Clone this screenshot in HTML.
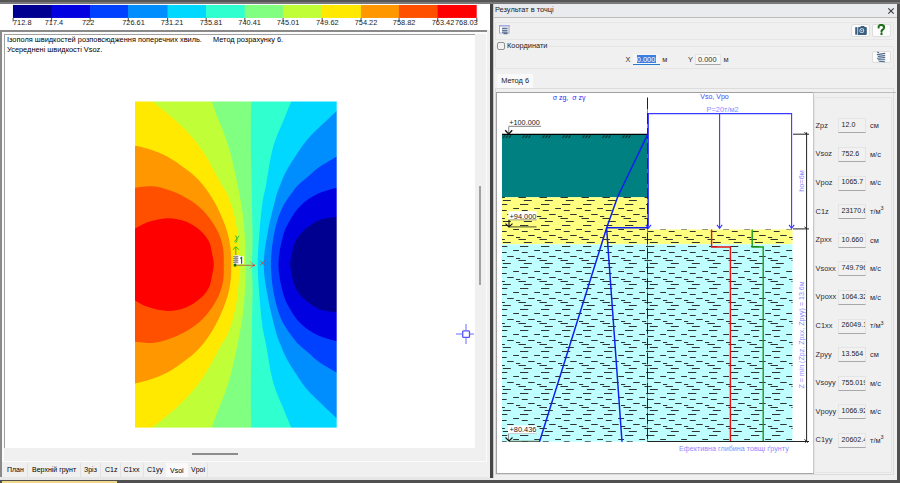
<!DOCTYPE html>
<html><head><meta charset="utf-8">
<style>
*{margin:0;padding:0;box-sizing:border-box}
html,body{width:900px;height:483px;overflow:hidden;background:#f0f0f0;font-family:"Liberation Sans",sans-serif;font-size:7.4px;color:#000}
.a{position:absolute}
.t{position:absolute;white-space:nowrap;line-height:1}
sup{font-size:5.5px;vertical-align:top;position:relative;top:-1.5px}
</style></head><body>
<!-- top dark bar -->
<div class="a" style="left:0;top:0;width:900px;height:2px;background:#565656"></div>
<div class="a" style="left:0;top:2px;width:900px;height:2px;background:#7a7a7a"></div>
<!-- bottom dark bar -->
<div class="a" style="left:0;top:480px;width:900px;height:3px;background:#505050"></div>
<div class="a" style="left:2px;top:481px;width:115px;height:2px;background:#f2d98a"></div>

<!-- LEFT PANE -->
<div class="a" id="leftpane" style="left:0;top:4px;width:490px;height:476px;background:#f0f0f0">
  <div class="a" style="left:0;top:0;width:490px;height:26px;background:#fff"></div>
</div>
<!-- legend swatches -->
<svg class="a" id="legend" style="left:0;top:0" width="490" height="30"><rect x="12.96" y="4.95" width="39.24" height="13" fill="#000090"/><rect x="51.5" y="4.95" width="39.20" height="13" fill="#0000e0"/><rect x="90.0" y="4.95" width="38.80" height="13" fill="#0040ff"/><rect x="128.1" y="4.95" width="40.10" height="13" fill="#008eff"/><rect x="167.5" y="4.95" width="39.20" height="13" fill="#00d8ff"/><rect x="206" y="4.95" width="39.40" height="13" fill="#30ffd0"/><rect x="244.7" y="4.95" width="38.90" height="13" fill="#80ff80"/><rect x="282.9" y="4.95" width="39.80" height="13" fill="#c0ff38"/><rect x="322" y="4.95" width="39.60" height="13" fill="#ffe900"/><rect x="360.9" y="4.95" width="38.70" height="13" fill="#ff9800"/><rect x="398.9" y="4.95" width="39.40" height="13" fill="#ff5000"/><rect x="437.6" y="4.95" width="39.10" height="13" fill="#ff0000"/></svg>
<div id="leglabels">
  <div class="t" style="left:13px;top:18.9px;color:#222">712.8</div>
  <div class="t" style="left:44.7px;top:18.9px;color:#222">717.4</div>
  <div class="t" style="left:82px;top:18.9px;color:#222">722</div>
  <div class="t" style="left:122.2px;top:18.9px;color:#222">726.61</div>
  <div class="t" style="left:160.7px;top:18.9px;color:#222">731.21</div>
  <div class="t" style="left:199.7px;top:18.9px;color:#222">735.81</div>
  <div class="t" style="left:238.3px;top:18.9px;color:#222">740.41</div>
  <div class="t" style="left:276.7px;top:18.9px;color:#222">745.01</div>
  <div class="t" style="left:316px;top:18.9px;color:#222">749.62</div>
  <div class="t" style="left:354.7px;top:18.9px;color:#222">754.22</div>
  <div class="t" style="left:392.8px;top:18.9px;color:#222">758.82</div>
  <div class="t" style="left:431.7px;top:18.9px;color:#222">763.42</div>
  <div class="t" style="left:455px;top:18.9px;color:#222">768.03</div>
  <svg class="a" style="left:0;top:0" width="490" height="30"><rect x="12.66" y="18" width="0.9" height="3.5" fill="#333"/><rect x="51.20" y="18" width="0.9" height="3.5" fill="#333"/><rect x="89.70" y="18" width="0.9" height="3.5" fill="#333"/><rect x="127.80" y="18" width="0.9" height="3.5" fill="#333"/><rect x="167.20" y="18" width="0.9" height="3.5" fill="#333"/><rect x="205.70" y="18" width="0.9" height="3.5" fill="#333"/><rect x="244.40" y="18" width="0.9" height="3.5" fill="#333"/><rect x="282.60" y="18" width="0.9" height="3.5" fill="#333"/><rect x="321.70" y="18" width="0.9" height="3.5" fill="#333"/><rect x="360.60" y="18" width="0.9" height="3.5" fill="#333"/><rect x="398.60" y="18" width="0.9" height="3.5" fill="#333"/><rect x="437.30" y="18" width="0.9" height="3.5" fill="#333"/><rect x="476.40" y="18" width="0.9" height="3.5" fill="#333"/></svg>
</div>

<!-- text panel frame -->
<div class="a" style="left:0;top:30px;width:487px;height:432px;border-top:2px solid #8a8a8a;border-left:2px solid #8a8a8a;background:#f0f0f0"></div>
<div class="a" style="left:2px;top:32px;width:485px;height:430px;border-top:2px solid #fbfbfb;border-left:2px solid #fbfbfb"></div>
<div class="a" style="left:4px;top:34px;width:471px;height:414px;background:#fff;border-top:1px solid #a0a0a0;border-left:1px solid #a0a0a0"></div>
<div class="t" style="left:7px;top:36.2px">Ізополя швидкостей розповсюдження поперечних хвиль.</div>
<div class="t" style="left:213px;top:36.2px">Метод розрахунку 6.</div>
<div class="t" style="left:7px;top:46.2px">Усереднені швидкості Vsoz.</div>
<!-- scrollbars -->
<div class="a" style="left:0;top:30px;width:1.6px;height:447px;background:#8a8a8a"></div>
<div class="a" style="left:0;top:477px;width:490px;height:3px;background:#e6e6e6"></div>
<div class="a" style="left:479px;top:186px;width:2px;height:99px;background:#a2a2a2"></div>
<div class="a" style="left:192px;top:453px;width:46px;height:2px;background:#8c8c8c"></div>
<div class="a" style="left:486px;top:34px;width:1px;height:428px;background:#fbfbfb"></div>
<div class="a" style="left:4px;top:461px;width:483px;height:1px;background:#fbfbfb"></div>

<!-- crosshair -->
<svg class="a" style="left:450px;top:320px" width="30" height="30">
  <g stroke="#5050ff" stroke-width="1.3" fill="none">
    <rect x="12.7" y="10.8" width="6.8" height="6.6" rx="1"/>
    <line x1="16" y1="4" x2="16" y2="10.3" stroke="#8c8cff"/>
    <line x1="16" y1="17.7" x2="16" y2="24" stroke="#8c8cff"/>
    <line x1="6" y1="14" x2="12.2" y2="14" stroke="#8c8cff"/>
    <line x1="19.8" y1="14" x2="24" y2="14" stroke="#8c8cff"/>
  </g>
</svg>

<!-- tabs -->
<div id="tabs" style="font-size:7px">
  <div class="a" style="left:166px;top:463px;width:22px;height:14px;background:#fafafa"></div>
  <div class="a" style="left:27px;top:463px;width:1px;height:14px;background:#e2e2e2"></div>
  <div class="a" style="left:79.5px;top:463px;width:1px;height:14px;background:#e2e2e2"></div>
  <div class="a" style="left:100px;top:463px;width:1px;height:14px;background:#e2e2e2"></div>
  <div class="a" style="left:120px;top:463px;width:1px;height:14px;background:#e2e2e2"></div>
  <div class="a" style="left:143px;top:463px;width:1px;height:14px;background:#e2e2e2"></div>
  <div class="a" style="left:206.5px;top:463px;width:1px;height:14px;background:#e2e2e2"></div>
  <div class="t" style="left:7px;top:466px">План</div>
  <div class="t" style="left:32px;top:466px">Верхній грунт</div>
  <div class="t" style="left:84px;top:466px">Зріз</div>
  <div class="t" style="left:105px;top:466px">C1z</div>
  <div class="t" style="left:123.5px;top:466px">C1xx</div>
  <div class="t" style="left:147px;top:466px">C1yy</div>
  <div class="t" style="left:170px;top:467px">Vsoi</div>
  <div class="t" style="left:191px;top:466px">Vpoi</div>
</div>

<!-- divider -->
<div class="a" style="left:490px;top:4px;width:2.5px;height:474px;background:#454545"></div>
<div class="a" style="left:492.5px;top:4px;width:1px;height:474px;background:#c8c8c8"></div>

<!-- CONTOUR PLOT -->
<svg class="a" id="contour" style="left:0;top:0" width="490" height="460">
<defs><mask id="pc" maskUnits="userSpaceOnUse" x="0" y="0" width="490" height="460"><rect x="135.0" y="101.5" width="201.7" height="326.1" fill="#fff"/></mask></defs>
<g mask="url(#pc)">
<rect x="132.0" y="98.5" width="207.7" height="332.1" fill="#80ff80"/>
<path fill="#c0ff38" d="M132.0,98.5 L211.09,98.50 C212.04,101.33 214.58,109.50 216.80,115.50 C219.02,121.50 222.03,127.83 224.40,134.50 C226.77,141.17 228.80,147.08 231.00,155.50 C233.20,163.92 235.68,175.58 237.60,185.00 C239.52,194.42 241.30,203.42 242.50,212.00 C243.70,220.58 244.28,229.33 244.80,236.50 C245.32,243.67 245.43,250.32 245.60,255.00 C245.77,259.68 245.80,261.37 245.80,264.55 C245.80,267.73 245.77,269.43 245.60,274.10 C245.43,278.78 245.32,285.43 244.80,292.60 C244.28,299.77 243.70,308.52 242.50,317.10 C241.30,325.68 239.52,334.68 237.60,344.10 C235.68,353.52 233.20,365.18 231.00,373.60 C228.80,382.02 226.77,387.93 224.40,394.60 C222.03,401.27 219.02,407.60 216.80,413.60 C214.58,419.60 212.04,427.77 211.09,430.60 L132.0,430.6Z"/>
<path fill="#ffe900" d="M132.0,98.5 L148.71,98.50 C151.80,101.02 161.42,108.58 167.30,113.60 C173.18,118.62 179.03,123.62 184.00,128.60 C188.97,133.58 193.05,138.22 197.10,143.50 C201.15,148.78 204.27,153.47 208.30,160.30 C212.33,167.13 218.18,178.95 221.30,184.50 C224.42,190.05 224.97,188.97 227.00,193.60 C229.03,198.23 231.80,206.07 233.50,212.30 C235.20,218.53 236.32,224.78 237.20,231.00 C238.08,237.22 238.50,244.01 238.80,249.60 C239.10,255.19 239.00,259.57 239.00,264.55 C239.00,269.53 239.10,273.91 238.80,279.50 C238.50,285.09 238.08,291.88 237.20,298.10 C236.32,304.32 235.20,310.57 233.50,316.80 C231.80,323.03 229.03,330.87 227.00,335.50 C224.97,340.13 224.42,339.05 221.30,344.60 C218.18,350.15 212.33,361.97 208.30,368.80 C204.27,375.63 201.15,380.32 197.10,385.60 C193.05,390.88 188.97,395.52 184.00,400.50 C179.03,405.48 173.18,410.48 167.30,415.50 C161.42,420.52 151.80,428.08 148.71,430.60 L132.0,430.6Z"/>
<path fill="#ff9800" d="M132.00,144.97 C134.77,145.64 142.72,147.08 148.60,149.00 C154.48,150.92 161.40,153.38 167.30,156.50 C173.20,159.62 179.65,164.62 184.00,167.70 C188.35,170.78 190.20,172.07 193.40,175.00 C196.60,177.93 199.78,180.95 203.20,185.30 C206.62,189.65 210.88,195.98 213.90,201.10 C216.92,206.22 219.12,211.02 221.30,216.00 C223.48,220.98 225.47,225.72 227.00,231.00 C228.53,236.28 229.80,242.11 230.50,247.70 C231.20,253.29 231.20,258.93 231.20,264.55 C231.20,270.17 231.20,275.81 230.50,281.40 C229.80,286.99 228.53,292.82 227.00,298.10 C225.47,303.38 223.48,308.12 221.30,313.10 C219.12,318.08 216.92,322.88 213.90,328.00 C210.88,333.12 206.62,339.45 203.20,343.80 C199.78,348.15 196.60,351.17 193.40,354.10 C190.20,357.03 188.35,358.32 184.00,361.40 C179.65,364.48 173.20,369.48 167.30,372.60 C161.40,375.72 154.48,378.18 148.60,380.10 C142.72,382.02 134.77,383.46 132.00,384.13Z"/>
<path fill="#ff5000" d="M132.00,187.96 C135.40,187.67 145.90,185.73 152.40,186.20 C158.90,186.67 164.48,188.32 171.00,190.80 C177.52,193.28 185.60,197.20 191.50,201.10 C197.40,205.00 202.05,209.22 206.40,214.20 C210.75,219.18 214.83,225.42 217.60,231.00 C220.37,236.58 221.97,242.11 223.00,247.70 C224.03,253.29 223.80,258.93 223.80,264.55 C223.80,270.17 224.03,275.81 223.00,281.40 C221.97,286.99 220.37,292.52 217.60,298.10 C214.83,303.68 210.75,309.92 206.40,314.90 C202.05,319.88 197.40,324.10 191.50,328.00 C185.60,331.90 177.52,335.82 171.00,338.30 C164.48,340.78 158.90,342.43 152.40,342.90 C145.90,343.37 135.40,341.43 132.00,341.14Z"/>
<path fill="#ff0000" d="M132.00,230.65 C134.47,229.29 140.92,224.58 146.80,222.50 C152.68,220.42 160.78,218.35 167.30,218.20 C173.82,218.05 180.32,219.47 185.90,221.60 C191.48,223.73 196.92,227.58 200.80,231.00 C204.68,234.42 207.33,238.38 209.20,242.10 C211.07,245.82 211.23,249.56 212.00,253.30 C212.77,257.04 213.80,260.80 213.80,264.55 C213.80,268.30 212.77,272.06 212.00,275.80 C211.23,279.54 211.07,283.28 209.20,287.00 C207.33,290.72 204.68,294.68 200.80,298.10 C196.92,301.52 191.48,305.37 185.90,307.50 C180.32,309.63 173.82,311.05 167.30,310.90 C160.78,310.75 152.68,308.68 146.80,306.60 C140.92,304.52 134.47,299.81 132.00,298.45Z"/>
<path fill="#30ffd0" d="M339.7,98.5 L251.36,98.50 C251.28,102.58 250.98,114.25 250.90,123.00 C250.82,131.75 250.78,140.67 250.90,151.00 C251.02,161.33 251.40,174.78 251.60,185.00 C251.80,195.22 251.93,203.13 252.10,212.30 C252.27,221.47 252.62,231.29 252.60,240.00 C252.58,248.71 252.00,256.37 252.00,264.55 C252.00,272.73 252.58,280.39 252.60,289.10 C252.62,297.81 252.27,307.63 252.10,316.80 C251.93,325.97 251.80,333.88 251.60,344.10 C251.40,354.32 251.02,367.77 250.90,378.10 C250.78,388.43 250.82,397.35 250.90,406.10 C250.98,414.85 251.28,426.52 251.36,430.60 L339.7,430.6Z"/>
<path fill="#00d8ff" d="M339.7,98.5 L292.54,98.50 C291.11,101.95 286.84,112.33 284.00,119.20 C281.16,126.07 277.70,133.40 275.50,139.70 C273.30,146.00 272.38,149.45 270.80,157.00 C269.22,164.55 267.40,177.33 266.00,185.00 C264.60,192.67 263.47,195.33 262.40,203.00 C261.33,210.67 260.38,220.74 259.60,231.00 C258.82,241.26 257.70,253.37 257.70,264.55 C257.70,275.73 258.82,287.84 259.60,298.10 C260.38,308.36 261.33,318.43 262.40,326.10 C263.47,333.77 264.60,336.43 266.00,344.10 C267.40,351.77 269.22,364.55 270.80,372.10 C272.38,379.65 273.30,383.10 275.50,389.40 C277.70,395.70 281.16,403.03 284.00,409.90 C286.84,416.77 291.11,427.15 292.54,430.60 L339.7,430.6Z"/>
<path fill="#008eff" d="M339.70,107.94 C336.75,110.75 327.43,119.51 322.00,124.80 C316.57,130.09 311.37,134.72 307.10,139.70 C302.83,144.68 299.73,149.72 296.40,154.70 C293.07,159.68 289.80,164.55 287.10,169.60 C284.40,174.65 282.15,180.07 280.20,185.00 C278.25,189.93 277.43,191.53 275.40,199.20 C273.37,206.87 269.95,220.11 268.00,231.00 C266.05,241.89 263.70,253.37 263.70,264.55 C263.70,275.73 266.05,287.21 268.00,298.10 C269.95,308.99 273.37,322.23 275.40,329.90 C277.43,337.57 278.25,339.17 280.20,344.10 C282.15,349.03 284.40,354.45 287.10,359.50 C289.80,364.55 293.07,369.42 296.40,374.40 C299.73,379.38 302.83,384.42 307.10,389.40 C311.37,394.38 316.57,399.01 322.00,404.30 C327.43,409.59 336.75,418.35 339.70,421.16Z"/>
<path fill="#0040ff" d="M339.70,154.67 C336.13,156.84 323.27,164.31 318.30,167.70 C313.33,171.09 312.70,172.62 309.90,175.00 C307.10,177.38 304.15,179.50 301.50,182.00 C298.85,184.50 297.42,185.27 294.00,190.00 C290.58,194.73 284.40,202.65 281.00,210.40 C277.60,218.15 275.27,227.47 273.60,236.50 C271.93,245.53 271.00,255.20 271.00,264.55 C271.00,273.90 271.93,283.58 273.60,292.60 C275.27,301.62 277.60,310.95 281.00,318.70 C284.40,326.45 290.58,334.37 294.00,339.10 C297.42,343.83 298.85,344.60 301.50,347.10 C304.15,349.60 307.10,351.72 309.90,354.10 C312.70,356.48 313.33,358.01 318.30,361.40 C323.27,364.79 336.13,372.26 339.70,374.43Z"/>
<path fill="#0000e0" d="M339.70,187.09 C336.13,188.17 324.67,190.65 318.30,193.60 C311.93,196.55 306.17,200.45 301.50,204.80 C296.83,209.15 293.40,214.42 290.30,219.70 C287.20,224.98 284.87,229.03 282.90,236.50 C280.93,243.97 278.50,255.20 278.50,264.55 C278.50,273.90 280.93,285.12 282.90,292.60 C284.87,300.08 287.20,304.12 290.30,309.40 C293.40,314.68 296.83,319.95 301.50,324.30 C306.17,328.65 311.93,332.55 318.30,335.50 C324.67,338.45 336.13,340.93 339.70,342.01Z"/>
<path fill="#000090" d="M339.70,216.51 C336.45,217.04 325.93,217.62 320.20,219.70 C314.47,221.78 309.33,225.57 305.30,229.00 C301.27,232.43 298.22,236.25 296.00,240.30 C293.78,244.35 292.95,249.26 292.00,253.30 C291.05,257.34 290.30,260.80 290.30,264.55 C290.30,268.30 291.05,271.76 292.00,275.80 C292.95,279.84 293.78,284.75 296.00,288.80 C298.22,292.85 301.27,296.67 305.30,300.10 C309.33,303.53 314.47,307.32 320.20,309.40 C325.93,311.48 336.45,312.06 339.70,312.59Z"/>
</g>

</svg>


<!-- origin marker -->
<svg class="a" style="left:226px;top:232px" width="42" height="40">
  <g stroke="#22c022" stroke-width="1" fill="none">
    <line x1="9.8" y1="14.8" x2="9.8" y2="23.5"/>
    <path d="M7,17.8 L9.8,14.6 L12.9,17.8"/>
  </g>
  <path d="M9,4 q1.5,-0.5 2,2.5 q0.5,3 -1.5,4.5 M13.2,3.8 l-4.8,6" stroke="#30b030" stroke-width="0.9" fill="none"/>
  <rect x="7" y="23.2" width="6" height="9.7" fill="#e8e8e8"/>
  <path d="M7.2,24.5 h5.5 l-5.5,2 h5.5 l-5.5,2 h5.5 l-5.5,2 h5.5" stroke="#8a8a8a" stroke-width="0.9" fill="none"/>
  <rect x="12.4" y="24" width="5.4" height="8" fill="#fff"/>
  <path d="M14.2,26.5 l1.4,-1 v6.3" stroke="#1a6a2a" stroke-width="1.2" fill="none"/>
  <line x1="11" y1="33.3" x2="27.8" y2="33.3" stroke="#b07a4a" stroke-width="1.1"/>
  <path d="M24.2,29.6 L28.2,33.3 L24.2,36.2" stroke="#c87a6a" stroke-width="0.9" fill="none"/>
  <circle cx="28" cy="33.3" r="0.9" fill="#ff2020"/>
  <circle cx="9.1" cy="33.1" r="1.6" fill="#1a6a1a"/>
  <path d="M34.5,29 l4,4 M38.8,28.8 l-4.5,4.2" stroke="#e03030" stroke-width="0.9" fill="none"/>
</svg>

<!-- DIALOG -->
<div class="a" id="dialog" style="left:493.5px;top:4px;width:403.5px;height:476px;background:#f0f0f0">
</div>
<div class="a" style="left:897px;top:4px;width:3px;height:476px;background:#505050"></div>

<!-- toolbar group -->
<div class="a" style="left:494.5px;top:21.5px;width:399px;height:18.5px;border:1px solid #e6e6e6;border-radius:1px;background:#f0f0f0"></div>
<svg class="a" style="left:496px;top:22px" width="18" height="16">
  <rect x="3.5" y="3.5" width="9.5" height="7.5" fill="#eef0f6" stroke="#a4a8c8" stroke-width="1"/>
  <rect x="3" y="3" width="10.5" height="1.5" fill="#a8a8e0"/>
  <rect x="4.2" y="5" width="1.6" height="5.5" fill="#fff"/>
  <g fill="#3c5a78">
    <rect x="6" y="5.8" width="5.5" height="1"/>
    <rect x="6" y="7.8" width="5.5" height="1"/>
    <rect x="6" y="9.6" width="5.5" height="1"/>
    <rect x="7.5" y="11.2" width="4" height="1"/>
  </g>
</svg>
<div class="a" style="left:851px;top:23.5px;width:19px;height:13px;background:#fcfcfc;border:1px solid #dedede;border-radius:2px"></div>
<div class="a" style="left:872px;top:23.5px;width:19px;height:13px;background:#fcfcfc;border:1px solid #dedede;border-radius:2px"></div>
<svg class="a" style="left:854px;top:25px" width="13" height="11">
  <path d="M1.2,2.2 h2.2 v7.5 h-2.2z" fill="#3b5f80"/>
  <path d="M4.2,2 h2 l0.8,-1 h3 l0.8,1 h1.2 q0.8,0 0.8,0.8 v6.3 q0,0.8 -0.8,0.8 h-8z" fill="#3b5f80"/>
  <circle cx="7.8" cy="5.7" r="2.4" fill="#e6ecf2"/>
  <circle cx="7.8" cy="5.7" r="1.6" fill="#3b5f80"/>
  <circle cx="7.8" cy="5.7" r="0.6" fill="#fff"/>
</svg>
<svg class="a" style="left:876px;top:24px" width="10" height="12"><path d="M2.6,3.6 C2.4,1.6 3.8,0.9 5.2,0.9 C7.2,0.9 8.1,2.1 8.1,3.4 C8.1,5.2 6.1,5.6 5.6,6.8 L5.5,7.8" stroke="#1e6e1e" stroke-width="2" fill="none" stroke-linecap="round"/><circle cx="5.5" cy="9.9" r="1.2" fill="#1e6e1e"/></svg>

<!-- coordinates group -->
<div class="a" style="left:494.5px;top:45.5px;width:399px;height:23px;border:1px solid #e6e6e6;border-radius:1px"></div>
<div class="a" style="left:506px;top:42px;width:42px;height:8px;background:#f0f0f0"></div>
<div class="a" style="left:497px;top:41.8px;width:8px;height:8.2px;border:1.2px solid #909090;border-radius:2px;background:#f2f2f2"></div>
<div class="t" style="left:507px;top:42px;color:#1a1a1a">Координати</div>
<div class="t" style="left:625.5px;top:56px;color:#333">X</div>
<div class="a" style="left:633px;top:53.5px;width:27px;height:11.5px;background:#f6f6f6;border-bottom:1.5px solid #2a7ad0"></div>
<div class="a" style="left:636.7px;top:55.3px;width:19.5px;height:7.5px;background:#3a7fe0"></div>
<div class="t" style="left:636.8px;top:55.8px;color:#fff">0.000</div>
<div class="t" style="left:662.2px;top:56px;color:#333">м</div>
<div class="t" style="left:688px;top:56px;color:#333">Y</div>
<div class="a" style="left:695px;top:53.5px;width:26px;height:11.5px;background:#f6f6f6;border:1px solid #e4e4e4;border-bottom:1px solid #a8a8a8"></div>
<div class="t" style="left:698px;top:55.8px;color:#333">0.000</div>
<div class="t" style="left:723.5px;top:56px;color:#333">м</div>
<div class="a" style="left:872px;top:50.6px;width:19px;height:12.7px;background:#fcfcfc;border:1px solid #dedede;border-radius:2px"></div>
<svg class="a" style="left:876px;top:51px" width="11" height="12">
  <g stroke="#4a6888" stroke-width="1.1" fill="none" stroke-linecap="round">
    <path d="M1.6,1.2 L2.6,1.6"/>
    <path d="M1.4,3.6 L8.8,2.4"/>
    <path d="M2.2,5.4 L8.8,4.6"/>
    <path d="M1.4,7.2 L8.8,6.6"/>
    <path d="M2.2,8.8 L8.8,8.8"/>
    <path d="M3.2,10.2 L8.6,10.8"/>
  </g>
</svg>

<!-- tab -->
<div class="a" style="left:497px;top:74px;width:36px;height:14px;background:#f9f9f9"></div>
<div class="t" style="left:501.2px;top:77.2px;color:#1a1a1a">Метод 6</div>
<div class="a" style="left:494.5px;top:88px;width:399.5px;height:386.5px;border:1px solid #dcdcdc;background:#f0f0f0"></div>
<!-- chart white box -->
<div class="a" style="left:496px;top:92px;width:317.5px;height:382px;background:#fff;border:1px solid #a8a8a8;border-top-color:#a0a0a0;border-left-color:#a0a0a0"></div>
<!-- param group -->
<div class="a" style="left:814px;top:96.5px;width:78px;height:376px;border:1px solid #e4e4e4;border-radius:1px"></div>
<div class="a" style="left:813px;top:92px;width:1px;height:381px;background:#c8c8c8"></div>
<div class="a" style="left:813px;top:92px;width:82.7px;height:1px;background:#bdbdbd"></div>


<!-- CHART -->
<svg class="a" id="chart" style="left:0;top:0" width="900" height="483">
<defs>
  <pattern id="dash" patternUnits="userSpaceOnUse" x="502" y="15" width="21" height="21">
    <g fill="#2e3430">
      <rect x="0" y="0" width="5.3" height="1"/><rect x="18" y="0" width="3" height="1"/>
      <rect x="11.2" y="4" width="5.8" height="1"/>
      <rect x="0" y="6" width="4.7" height="1"/><rect x="19.8" y="6" width="1.2" height="1"/>
      <rect x="5.2" y="10" width="6.5" height="1"/>
      <rect x="14" y="12" width="4.2" height="1"/>
      <rect x="0" y="14" width="2.9" height="1"/><rect x="16.5" y="14" width="4.5" height="1"/>
      <rect x="0.8" y="17" width="8" height="1"/>
    </g>
  </pattern>
</defs>
<rect x="502" y="134.6" width="145.5" height="62.7" fill="#008080"/>
<rect x="502" y="197.3" width="145.5" height="47" fill="#ffff80"/>
<rect x="647.5" y="229.5" width="145" height="14.8" fill="#ffff80"/>
<rect x="502" y="244.3" width="290.5" height="197.4" fill="#c0ffff"/>
<rect x="502" y="197" width="145.5" height="244.7" fill="url(#dash)"/>
<rect x="647.5" y="229.5" width="145" height="212.2" fill="url(#dash)"/>
<!-- hatch on ground -->
<g stroke="#0e2e2e" stroke-width="1.1">
  <path d="M503,138 l2,-2.6 M506,138 l2,-2.6 M509,138 l2,-2.6"/>
  <path d="M522.5,138 l2,-2.6 M525.5,138 l2,-2.6 M528.5,138 l2,-2.6"/>
  <path d="M542.5,138 l2,-2.6 M545.5,138 l2,-2.6 M548.5,138 l2,-2.6"/>
  <path d="M562.5,138 l2,-2.6 M565.5,138 l2,-2.6 M568.5,138 l2,-2.6"/>
  <path d="M582.5,138 l2,-2.6 M585.5,138 l2,-2.6 M588.5,138 l2,-2.6"/>
  <path d="M602.5,138 l2,-2.6 M605.5,138 l2,-2.6 M608.5,138 l2,-2.6"/>
  <path d="M622.5,138 l2,-2.6 M625.5,138 l2,-2.6 M628.5,138 l2,-2.6"/>
</g>
<line x1="502" y1="134.4" x2="647.5" y2="134.4" stroke="#000" stroke-width="1.3"/>
<!-- axis dash-dot -->
<line x1="647.5" y1="97.5" x2="647.5" y2="441.7" stroke="#202020" stroke-width="1" stroke-dasharray="12,1,1,1"/>
<!-- blue load rectangle -->
<g stroke="#3a3aff" stroke-width="1.1" fill="none">
  <path d="M648.4,228 V113.6 H791.6 V228"/>
  <line x1="719.6" y1="113.6" x2="719.6" y2="228"/>
  <path d="M645.8,224.8 L648.4,228.3 L651,224.8 M717,224.8 L719.6,228.3 L722.2,224.8 M789,224.8 L791.6,228.3 L794.2,224.8"/>
</g>
<!-- blue stress lines -->
<g stroke="#1020f0" stroke-width="1.5" fill="none">
  <path d="M647.5,134.6 L617.5,197.3 L606.6,228 L539.5,441.7"/>
  <path d="M606.6,228 L622,441.7"/>
  <line x1="606.6" y1="227.7" x2="648" y2="227.7"/>
</g>
<!-- red & green -->
<path d="M711.6,229.5 V247 H730.4 V441.7" stroke="#ee1111" stroke-width="1.4" fill="none"/>
<path d="M752.2,229.5 V247 H763.2 V441.7" stroke="#1a9a1a" stroke-width="1.4" fill="none"/>
<!-- dimension lines right -->
<g stroke="#222" stroke-width="1" fill="none">
  <line x1="793" y1="134.2" x2="809" y2="134.2"/>
  <line x1="793" y1="228.9" x2="809" y2="228.9"/>
  <line x1="647.5" y1="441.5" x2="809" y2="441.5"/>
  <line x1="806.6" y1="132.3" x2="806.6" y2="442"/>
  <path d="M804.5,132.2 l2.2,2.2 M804.5,226.7 l2.2,2.2 M804.5,439.3 l2.2,2.2 M805.2,442.6 l1.4,-1.2 l1.4,1.2"/>
</g>
<!-- level marks -->
<g stroke="#888" stroke-width="0.9" fill="none">
  <path d="M508.7,126.4 H541 M508.7,126.4 V133.5" stroke-width="1.2" stroke="#999"/>
  <path d="M508.5,219.8 H536.5"/>
  <path d="M508.5,433.3 H536.5 M508.5,433.3 V441"/>
</g>
<g stroke="#111" stroke-width="1.1" fill="none">
  <path d="M505.2,130.3 L508.7,134 L512.2,130.3" stroke-width="1.4"/>
  <path d="M505.5,223.6 L509,227 L512.5,223.6 M509,220 V227"/>
  <path d="M505.5,437.5 L509,441 L512.5,437.5"/>
</g>
<line x1="509" y1="226.9" x2="536.5" y2="226.9" stroke="#3a3a20" stroke-width="0.9"/>
<line x1="509" y1="441.3" x2="540" y2="441.3" stroke="#3a3a20" stroke-width="0.9"/>
<rect x="508.3" y="211.2" width="28.2" height="8" fill="#fff"/>
<rect x="508" y="425.5" width="28.5" height="8" fill="#fff"/>
</svg>
<div class="t" style="left:509.3px;top:118.5px;font-size:7.25px;color:#1a1a1a">+100.000</div>
<div class="t" style="left:509.5px;top:212.5px;color:#1a1a1a">+94.000</div>
<div class="t" style="left:509.5px;top:426.2px;color:#1a1a1a">+80.436</div>
<div class="t" style="left:552.7px;top:93.6px;font-size:7px;color:#2a2aff">σ zg,&nbsp; σ zγ</div>
<div class="t" style="left:700.2px;top:93px;font-size:7.05px;color:#4646ff">Vso, Vpo</div>
<div class="t" style="left:706.6px;top:106px;color:#8a8aff">P=20т/м2</div>
<div class="t" style="left:679px;top:445px;font-size:7.2px;color:#8a8aff">Ефективна глибина товщі ґрунту</div>
<div class="t" style="left:801.5px;top:181px;color:#8a8aff;transform:translate(-50%,-50%) rotate(-90deg)">hо=6м</div>
<div class="t" style="left:801.5px;top:334.5px;font-size:7.05px;color:#8a8aff;transform:translate(-50%,-50%) rotate(-90deg)">Z = min (Zpz, Zpxx, Zpyy) = 13.6м</div>

<!-- params -->
<div class="t" style="left:815.6px;top:121.8px;color:#2a2a3a">Zpz</div>
<div class="a" style="left:838px;top:118.3px;width:28px;height:15px;background:#f1f1f1;border:1px solid #e4e4e4;border-bottom:1px solid #a9a9a9;overflow:hidden"><div class="t" style="left:2.6px;top:1.9px;font-size:7.05px;color:#222">12.0</div></div>
<div class="t" style="left:870px;top:122.1px;color:#2a2a3a">см</div>
<div class="t" style="left:815.6px;top:150.4px;color:#2a2a3a">Vsoz</div>
<div class="a" style="left:838px;top:146.9px;width:28px;height:15px;background:#f1f1f1;border:1px solid #e4e4e4;border-bottom:1px solid #a9a9a9;overflow:hidden"><div class="t" style="left:2.6px;top:1.9px;font-size:7.05px;color:#222">752.6</div></div>
<div class="t" style="left:870px;top:150.7px;color:#2a2a3a">м/с</div>
<div class="t" style="left:815.6px;top:179.0px;color:#2a2a3a">Vpoz</div>
<div class="a" style="left:838px;top:175.5px;width:28px;height:15px;background:#f1f1f1;border:1px solid #e4e4e4;border-bottom:1px solid #a9a9a9;overflow:hidden"><div class="t" style="left:2.6px;top:1.9px;font-size:7.05px;color:#222">1065.7</div></div>
<div class="t" style="left:870px;top:179.3px;color:#2a2a3a">м/с</div>
<div class="t" style="left:815.6px;top:207.6px;color:#2a2a3a">C1z</div>
<div class="a" style="left:838px;top:204.1px;width:28px;height:15px;background:#f1f1f1;border:1px solid #e4e4e4;border-bottom:1px solid #a9a9a9;overflow:hidden"><div class="t" style="left:2.6px;top:1.9px;font-size:7.05px;color:#222">23170.6</div></div>
<div class="t" style="left:870px;top:207.9px;color:#2a2a3a">т/м<sup>3</sup></div>
<div class="t" style="left:815.6px;top:236.2px;color:#2a2a3a">Zpxx</div>
<div class="a" style="left:838px;top:232.7px;width:28px;height:15px;background:#f1f1f1;border:1px solid #e4e4e4;border-bottom:1px solid #a9a9a9;overflow:hidden"><div class="t" style="left:2.6px;top:1.9px;font-size:7.05px;color:#222">10.660</div></div>
<div class="t" style="left:870px;top:236.5px;color:#2a2a3a">см</div>
<div class="t" style="left:815.6px;top:264.8px;color:#2a2a3a">Vsoxx</div>
<div class="a" style="left:838px;top:261.3px;width:28px;height:15px;background:#f1f1f1;border:1px solid #e4e4e4;border-bottom:1px solid #a9a9a9;overflow:hidden"><div class="t" style="left:2.6px;top:1.9px;font-size:7.05px;color:#222">749.796</div></div>
<div class="t" style="left:870px;top:265.1px;color:#2a2a3a">м/с</div>
<div class="t" style="left:815.6px;top:293.4px;color:#2a2a3a">Vpoxx</div>
<div class="a" style="left:838px;top:289.9px;width:28px;height:15px;background:#f1f1f1;border:1px solid #e4e4e4;border-bottom:1px solid #a9a9a9;overflow:hidden"><div class="t" style="left:2.6px;top:1.9px;font-size:7.05px;color:#222">1064.32</div></div>
<div class="t" style="left:870px;top:293.7px;color:#2a2a3a">м/с</div>
<div class="t" style="left:815.6px;top:322.0px;color:#2a2a3a">C1xx</div>
<div class="a" style="left:838px;top:318.5px;width:28px;height:15px;background:#f1f1f1;border:1px solid #e4e4e4;border-bottom:1px solid #a9a9a9;overflow:hidden"><div class="t" style="left:2.6px;top:1.9px;font-size:7.05px;color:#222">26049.1</div></div>
<div class="t" style="left:870px;top:322.3px;color:#2a2a3a">т/м<sup>3</sup></div>
<div class="t" style="left:815.6px;top:350.6px;color:#2a2a3a">Zpyy</div>
<div class="a" style="left:838px;top:347.1px;width:28px;height:15px;background:#f1f1f1;border:1px solid #e4e4e4;border-bottom:1px solid #a9a9a9;overflow:hidden"><div class="t" style="left:2.6px;top:1.9px;font-size:7.05px;color:#222">13.564</div></div>
<div class="t" style="left:870px;top:350.9px;color:#2a2a3a">см</div>
<div class="t" style="left:815.6px;top:379.2px;color:#2a2a3a">Vsoyy</div>
<div class="a" style="left:838px;top:375.7px;width:28px;height:15px;background:#f1f1f1;border:1px solid #e4e4e4;border-bottom:1px solid #a9a9a9;overflow:hidden"><div class="t" style="left:2.6px;top:1.9px;font-size:7.05px;color:#222">755.019</div></div>
<div class="t" style="left:870px;top:379.5px;color:#2a2a3a">м/с</div>
<div class="t" style="left:815.6px;top:407.8px;color:#2a2a3a">Vpoyy</div>
<div class="a" style="left:838px;top:404.3px;width:28px;height:15px;background:#f1f1f1;border:1px solid #e4e4e4;border-bottom:1px solid #a9a9a9;overflow:hidden"><div class="t" style="left:2.6px;top:1.9px;font-size:7.05px;color:#222">1066.92</div></div>
<div class="t" style="left:870px;top:408.1px;color:#2a2a3a">м/с</div>
<div class="t" style="left:815.6px;top:436.4px;color:#2a2a3a">C1yy</div>
<div class="a" style="left:838px;top:432.9px;width:28px;height:15px;background:#f1f1f1;border:1px solid #e4e4e4;border-bottom:1px solid #a9a9a9;overflow:hidden"><div class="t" style="left:2.6px;top:1.9px;font-size:7.05px;color:#222">20602.4</div></div>
<div class="t" style="left:870px;top:436.7px;color:#2a2a3a">т/м<sup>3</sup></div>
<!-- title bar -->
<div class="a" style="left:493.5px;top:4px;width:403.5px;height:13px;background:#e9ebee"></div>
<div class="a" style="left:493.5px;top:17px;width:403.5px;height:1px;background:#bdbdbd"></div>
<div class="t" style="left:495px;top:6.3px;color:#222">Результат в точці</div>
<svg class="a" style="left:886px;top:6px" width="10" height="10"><path d="M2.3,2.3 L7.7,7.7 M7.7,2.3 L2.3,7.7" stroke="#3a3a3a" stroke-width="1.1"/></svg>

</body></html>
